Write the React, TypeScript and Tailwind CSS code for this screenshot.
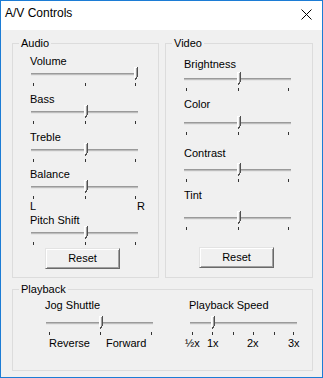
import type { ReactNode } from "react";

const TRACK_Y = 6;

function Thumb({ p }: { p: number }) {
  const t = TRACK_Y;
  return (
    <g>
      <rect x={p - 1} y={t - 6} width={4} height={11} fill="#f4f4f4" />
      <rect x={p - 1} y={t - 6} width={1} height={11} fill="#ffffff" />
      <rect x={p - 1} y={t - 6} width={3} height={1} fill="#ffffff" />
      <rect x={p + 1} y={t - 5} width={1} height={9} fill="#a0a0a0" />
      <rect x={p + 2} y={t - 6} width={1} height={10} fill="#505050" />
      <rect x={p + 1} y={t + 4} width={1} height={2} fill="#505050" />
      <rect x={p} y={t + 5} width={1} height={2} fill="#505050" />
    </g>
  );
}

function Slider({ pos, ticks }: { pos: number; ticks: number[] }) {
  const t = TRACK_Y;
  return (
    <svg width={110} height={20} className="block overflow-visible" shapeRendering="crispEdges">
      <rect x={1} y={t} width={107} height={1} fill="#9a9a9a" />
      <rect x={1} y={t + 1} width={107} height={1} fill="#bdbdbd" />
      <rect x={1} y={t + 2} width={107} height={1} fill="#e6e6e6" />
      {ticks.map((x) => (
        <rect key={x} x={x} y={t + 10} width={1} height={3} fill="#333333" />
      ))}
      <Thumb p={pos} />
    </svg>
  );
}

function Label({ children, className = "" }: { children: ReactNode; className?: string }) {
  return <div className={`h-[12px] leading-[12px] ${className}`}>{children}</div>;
}

function GroupBox({ title, className, children }: { title: string; className: string; children: ReactNode }) {
  return (
    <fieldset className={`border border-[#dcdcdc] ${className}`}>
      <legend className="ml-[6px] px-[2px] leading-[13px]">{title}</legend>
      {children}
    </fieldset>
  );
}

function ResetButton({ className }: { className: string }) {
  return (
    <button
      className={`block h-[21px] w-[75px] border border-t-[#e3e3e3] border-l-[#e3e3e3] border-r-[#696969] border-b-[#696969] bg-[#f0f0f0] text-[11px] leading-[17px] shadow-[inset_1px_1px_0_#ffffff,inset_-1px_-1px_0_#a0a0a0] ${className}`}
    >
      Reset
    </button>
  );
}

const MID = [3, 55, 105];

export default function App() {
  return (
    <div className="h-[378px] w-[323px] border border-[#1c7cd5] bg-[#f0f0f0] font-['Liberation_Sans',Arial,sans-serif] text-[11px] text-black">
      <div className="flex h-[29px] items-start justify-between bg-white pl-[4px] pr-[10px]">
        <span className="mt-[5px] text-[12px] leading-[14px]">A/V Controls</span>
        <svg width={11} height={11} className="mt-[8px]">
          <path d="M0.5 0.5 L10.5 10.5 M10.5 0.5 L0.5 10.5" stroke="#000" strokeWidth={1} />
        </svg>
      </div>

      <div className="flex flex-col pl-[11px] pt-[7px]">
        <div className="flex gap-[6px]">
          <GroupBox title="Audio" className="h-[241px] w-[147px]">
            <div className="pl-[17px] pt-[5px]">
              <Label>Volume</Label>
              <Slider pos={105} ticks={MID} />
              <Label className="mt-[6px]">Bass</Label>
              <Slider pos={55} ticks={MID} />
              <Label className="mt-[6px]">Treble</Label>
              <Slider pos={55} ticks={MID} />
              <Label className="mt-[5px]">Balance</Label>
              <Slider pos={55} ticks={MID} />
              <div className="flex w-[115px] justify-between leading-[13px]">
                <span>L</span>
                <span>R</span>
              </div>
              <Label className="mt-[1px]">Pitch Shift</Label>
              <Slider pos={55} ticks={MID} />
              <ResetButton className="ml-[15px] mt-[2px]" />
            </div>
          </GroupBox>

          <GroupBox title="Video" className="h-[241px] w-[148px]">
            <div className="pl-[17px] pt-[8px]">
              <Label className="pl-[1px]">Brightness</Label>
              <div className="mt-[2px]">
                <Slider pos={55} ticks={MID} />
              </div>
              <Label className="mt-[6px] pl-[1px]">Color</Label>
              <div className="mt-[6px]">
                <Slider pos={55} ticks={MID} />
              </div>
              <Label className="mt-[11px] pl-[1px]">Contrast</Label>
              <div className="mt-[4px]">
                <Slider pos={55} ticks={MID} />
              </div>
              <Label className="mt-[6px] pl-[1px]">Tint</Label>
              <div className="mt-[10px]">
                <Slider pos={55} ticks={MID} />
              </div>
              <ResetButton className="ml-[16px] mt-[16px]" />
            </div>
          </GroupBox>
        </div>

        <GroupBox title="Playback" className="mt-[5px] h-[88px] w-[301px]">
          <div className="flex pl-[32px] pt-[3px]">
            <div className="w-[144px]">
              <Label>Jog Shuttle</Label>
              <div className="mt-[5px]">
                <Slider pos={55} ticks={[4, 55, 106]} />
              </div>
              <div className="mt-[1px] flex pl-[4px] leading-[13px]">
                <span className="w-[57px]">Reverse</span>
                <span>Forward</span>
              </div>
            </div>
            <div>
              <Label>Playback Speed</Label>
              <div className="mt-[5px]">
                <Slider pos={23} ticks={[3, 23, 44, 64, 85, 104]} />
              </div>
              <div className="-ml-[4px] mt-[1px] flex leading-[13px]">
                <span className="w-[22px]">½x</span>
                <span className="w-[40px]">1x</span>
                <span className="w-[41px]">2x</span>
                <span>3x</span>
              </div>
            </div>
          </div>
        </GroupBox>
      </div>
    </div>
  );
}
